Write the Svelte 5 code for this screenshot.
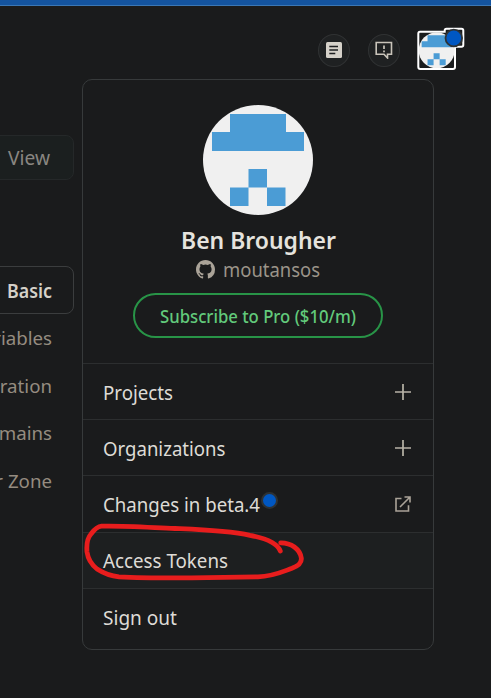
<script>
  const tabs = ['Variables', 'Integration', 'Domains', 'Danger Zone'];
  const items = [
    { label: 'Projects', width: 70, icon: 'plus' },
    { label: 'Organizations', width: 122.5, icon: 'plus' },
    { label: 'Changes in beta.4', width: 157, icon: 'external', dot: true },
    { label: 'Access Tokens', width: 125, active: true },
    { label: 'Sign out', width: 74 }
  ];
</script>

{#snippet identicon()}
  <path fill="#4b9cd5" d="M27 9H83V27H101V46H9V27H27ZM45.500 64H64V82.500H82.500V101H64V82.500H45.500V101H27V82.500H45.500Z" />
{/snippet}

{#snippet label(text, width)}
  <svg class="label" {width} height="28"><text x="0" y="21" textLength={width} lengthAdjust="spacingAndGlyphs">{text}</text></svg>
{/snippet}

<div class="page">
  <div class="strip"></div>
  <header>
    <button aria-label="Documentation">
      <svg width="16" height="16" viewBox="0 0 16 16"><rect width="16" height="16" rx="1.500" fill="#d5d1c9" /><path d="M3.300 4.500H12M3.300 8H12M3.300 11.500H9.300" stroke="#1d1f20" stroke-width="1.400" /></svg>
    </button>
    <button aria-label="Feedback">
      <svg width="18" height="18" viewBox="0 0 18 18" fill="none" stroke="#c9c4ba" stroke-width="1.600"><path d="M1.200 1.500H16.500V13.200H12.500V17L9 13.200H1.200Z" /><path d="M9 4.500v3.500M9 9.500v1.700" stroke-width="1.700" /></svg>
    </button>
    <div class="account">
      <svg width="49" height="45" viewBox="416 27 49 45">
        <path d="M420 31.700H444.700V30.500Q444.700 28.700 446.500 28.700H461.500Q463.300 28.700 463.300 30.500V45Q463.300 46.800 461.500 46.800H455V67Q455 69 453 69H420.300Q418.300 69 418.300 67V33.700Q418.300 31.700 420 31.700Z" fill="#1a1c1d" stroke="#fff" stroke-width="2" />
        <svg x="418.700" y="32.300" width="36" height="36" viewBox="0 0 110 110"><circle cx="55" cy="55" r="55" fill="#f0f0f0" />{@render identicon()}</svg>
        <circle cx="453.800" cy="38" r="8.300" fill="#0057c2" stroke="#2d3235" stroke-width="1.800" />
      </svg>
    </div>
  </header>

  <aside>
    <div class="view">{@render label('View', 42)}</div>
    <nav>
      <div class="basic">{@render label('Basic', 45)}</div>
      {#each tabs as tab}
        <div class="tab">{tab}</div>
      {/each}
    </nav>
  </aside>

  <section class="menu">
    <div class="profile">
      <svg class="avatar" width="110" height="110"><circle cx="55" cy="55" r="55" fill="#f0f0f0" />{@render identicon()}</svg>
      <div class="name">{@render label('Ben Brougher', 155)}</div>
      <div class="handle">
        <svg width="19" height="19" viewBox="0 0 16 16" fill="#aaa398"><path d="M8 0C3.580 0 0 3.580 0 8c0 3.540 2.290 6.530 5.470 7.590.4.070.55-.17.55-.38 0-.19-.01-.82-.01-1.490-2.010.37-2.530-.49-2.690-.94-.09-.23-.48-.94-.82-1.130-.28-.15-.68-.52-.01-.53.63-.01 1.080.58 1.230.82.72 1.210 1.870.87 2.330.66.07-.52.28-.87.51-1.070-1.780-.2-3.640-.89-3.640-3.950 0-.87.31-1.590.82-2.150-.08-.2-.36-1.020.08-2.120 0 0 .67-.21 2.200.82a7.500 7.500 0 0 1 4 0c1.530-1.040 2.200-.82 2.200-.82.44 1.100.16 1.920.08 2.120.51.56.82 1.270.82 2.150 0 3.070-1.870 3.750-3.650 3.950.29.25.54.73.54 1.480 0 1.070-.01 1.930-.01 2.200 0 .21.15.46.55.38A8.010 8.010 0 0 0 16 8c0-4.420-3.580-8-8-8Z" /></svg>
        {@render label('moutansos', 97)}
      </div>
      <button class="subscribe">{@render label('Subscribe to Pro ($10/m)', 196)}</button>
    </div>
    {#each items as item}
      <div class="row" class:active={item.active}>
        {@render label(item.label, item.width)}
        {#if item.dot}<span class="dot"></span>{/if}
        <span class="icon">
          {#if item.icon === 'plus'}
            <svg width="16" height="16" stroke="#b8b3a6" stroke-width="1.700"><path d="M8 0V16M0 8H16" /></svg>
          {:else if item.icon === 'external'}
            <svg width="16" height="16" fill="none" stroke="#aaa398" stroke-width="1.600"><path d="M6.500 2.500H1V15H13.500V9.300M9.500 1H15V6.500M15 1L5 11" /></svg>
          {/if}
        </span>
      </div>
    {/each}
  </section>

  <svg class="marker" width="491" height="698" fill="none" stroke="#e81d1d" stroke-width="4.800" stroke-linecap="round" stroke-linejoin="round">
    <path d="M280.300 551C277 542 264 538 250 535.300C228 530.500 198 529.500 175 528.500C145 527.200 120 525.500 101.500 526.200C97 526.500 94 530 91 534C86.500 539 86.500 546 87 552C88 559 92 565 97 569C104 573.500 110 576 119 576.800C148 578.300 178 578 208 577.700L258 576.800C273 576.500 283 571.500 292 568.300C298 566 302 563.500 301.300 558C300 549 291 542.700 280.700 542.800" />
  </svg>
</div>

<style>
  :global(body) { margin: 0; background: #1a1b1c; }
  .page { position: relative; width: 491px; height: 698px; overflow: hidden; background: #1a1b1c; font: 19px "Noto Sans", "Open Sans", sans-serif; color: #dedbd6; }
  .strip { height: 5px; background: #14549f; border-bottom: 1px solid #3b77b5; }
  header { display: flex; justify-content: flex-end; align-items: flex-start; height: 73px; padding: 21px 26px 0 0; box-sizing: border-box; }
  header button { width: 32px; height: 33px; margin: 7px 18px 0 0; padding: 0 0 1px; box-sizing: border-box; display: grid; place-items: center; border-radius: 50%; background: #1f2122; border: 1px solid #303233; }
  header button + button { margin-right: 16px; }
  .account svg, .label, .row svg, .handle svg, .avatar { display: block; }
  .label { overflow: visible; flex: none; fill: currentColor; }
  aside { width: 74px; padding-top: 56px; }
  .view, .basic { box-sizing: border-box; width: 86px; margin-left: -12px; display: flex; align-items: center; justify-content: flex-end; border: 1px solid #252829; border-radius: 8px; }
  .view { height: 45px; padding-right: 23px; background: #1b1f1f; color: #898681; }
  nav { margin-top: 86px; }
  .basic { height: 48px; padding: 2px 21px 0 0; font-weight: 600; border-color: #3b3d3e; color: #d5d1c9; }
  .tab { height: 47.500px; display: flex; align-items: center; justify-content: flex-end; padding-right: 22px; white-space: nowrap; color: #958c80; font-size: 18.700px; }
  .menu { position: absolute; left: 82px; top: 79px; width: 352px; height: 571px; box-sizing: border-box; border: 1px solid #373a3b; border-radius: 10px; background: #1a1b1c; overflow: hidden; }
  .profile { height: 283px; display: flex; flex-direction: column; align-items: center; padding-top: 25px; box-sizing: border-box; }
  .name { margin-top: 13px; font-size: 23.500px; font-weight: 600; color: #e5e3de; }
  .handle { display: flex; align-items: center; gap: 8px; color: #9b9489; }
  .handle > svg:first-child { margin-top: -2px; }
  .subscribe { width: 250px; height: 45px; box-sizing: border-box; display: grid; place-items: center; padding: 0; margin-top: 9px; border: 2px solid #289447; border-radius: 23px; background: transparent; color: #62ca7b; font: 500 17.500px "Noto Sans", sans-serif; }
  .row { height: 56.200px; box-sizing: border-box; border-top: 1px solid #2c2e2f; padding: 2px 22px 0 20px; display: flex; align-items: center; }
  .row:last-child { padding-top: 4px; }
  .active { background: #1d1f20; }
  .icon { margin: -2px 0 0 auto; }
  .dot { width: 13px; height: 13px; margin: -9px 0 0 1px; border: 2px solid #2d3235; border-radius: 50%; background: #0057c2; }
  .marker { position: absolute; inset: 0; pointer-events: none; }
</style>
